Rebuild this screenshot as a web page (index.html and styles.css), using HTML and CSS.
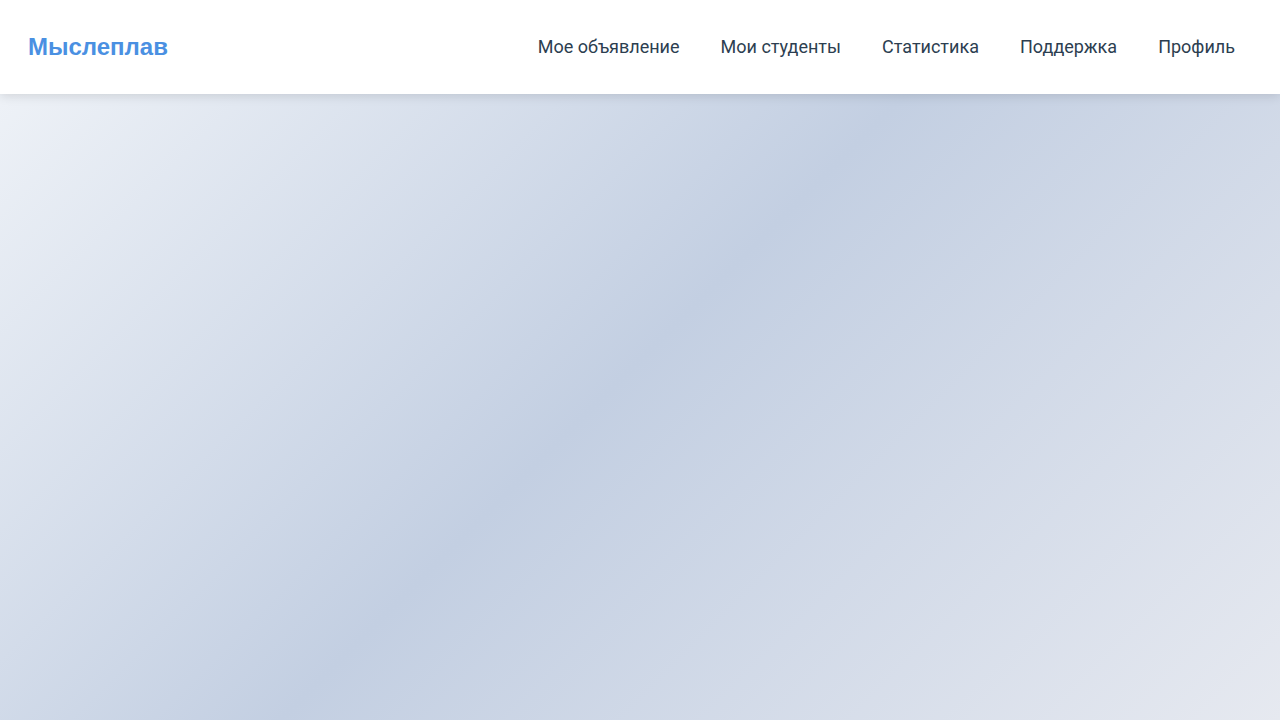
FILE: index.html
```html
<!DOCTYPE html>
<html lang="ru">
<head>
<meta charset="utf-8">
<title>Мыслеплав</title>
<link rel="stylesheet" href="styles.css">
</head>
<body>
<header class="header">
  <a class="logo" href="#">Мыслеплав</a>
  <nav class="nav">
    <a class="nav-link" href="#">Мое объявление</a>
    <a class="nav-link" href="#">Мои студенты</a>
    <a class="nav-link" href="#">Статистика</a>
    <a class="nav-link" href="#">Поддержка</a>
    <a class="nav-link" href="#">Профиль</a>
  </nav>
</header>
<main class="main"></main>
</body>
</html>
```

FILE: styles.css
```css
* { box-sizing: border-box; }
html, body { margin: 0; padding: 0; }
body {
  min-height: 100vh;
  background: linear-gradient(135deg, #f2f5f9 0%, #c3cfe2 50%, #e6e9f0 100%);
  font-family: Roboto, "Noto Sans", sans-serif;
}
.header {
  height: 94px;
  background: #ffffff;
  display: flex;
  align-items: center;
  justify-content: space-between;
  padding: 0 29px 0 28px;
  box-shadow: 0 2px 10px rgba(0, 0, 0, 0.12);
  position: relative;
}
.logo {
  font-family: "Liberation Sans", Arial, sans-serif;
  font-weight: bold;
  font-size: 24px;
  color: #4a90e2;
  text-decoration: none;
}
.nav {
  display: flex;
  gap: 9px;
}
.nav-link {
  font-size: 18px;
  color: #2c3e50;
  text-decoration: none;
  padding: 7px 16px 9px;
}
.main {
  min-height: calc(100vh - 94px);
}
```
